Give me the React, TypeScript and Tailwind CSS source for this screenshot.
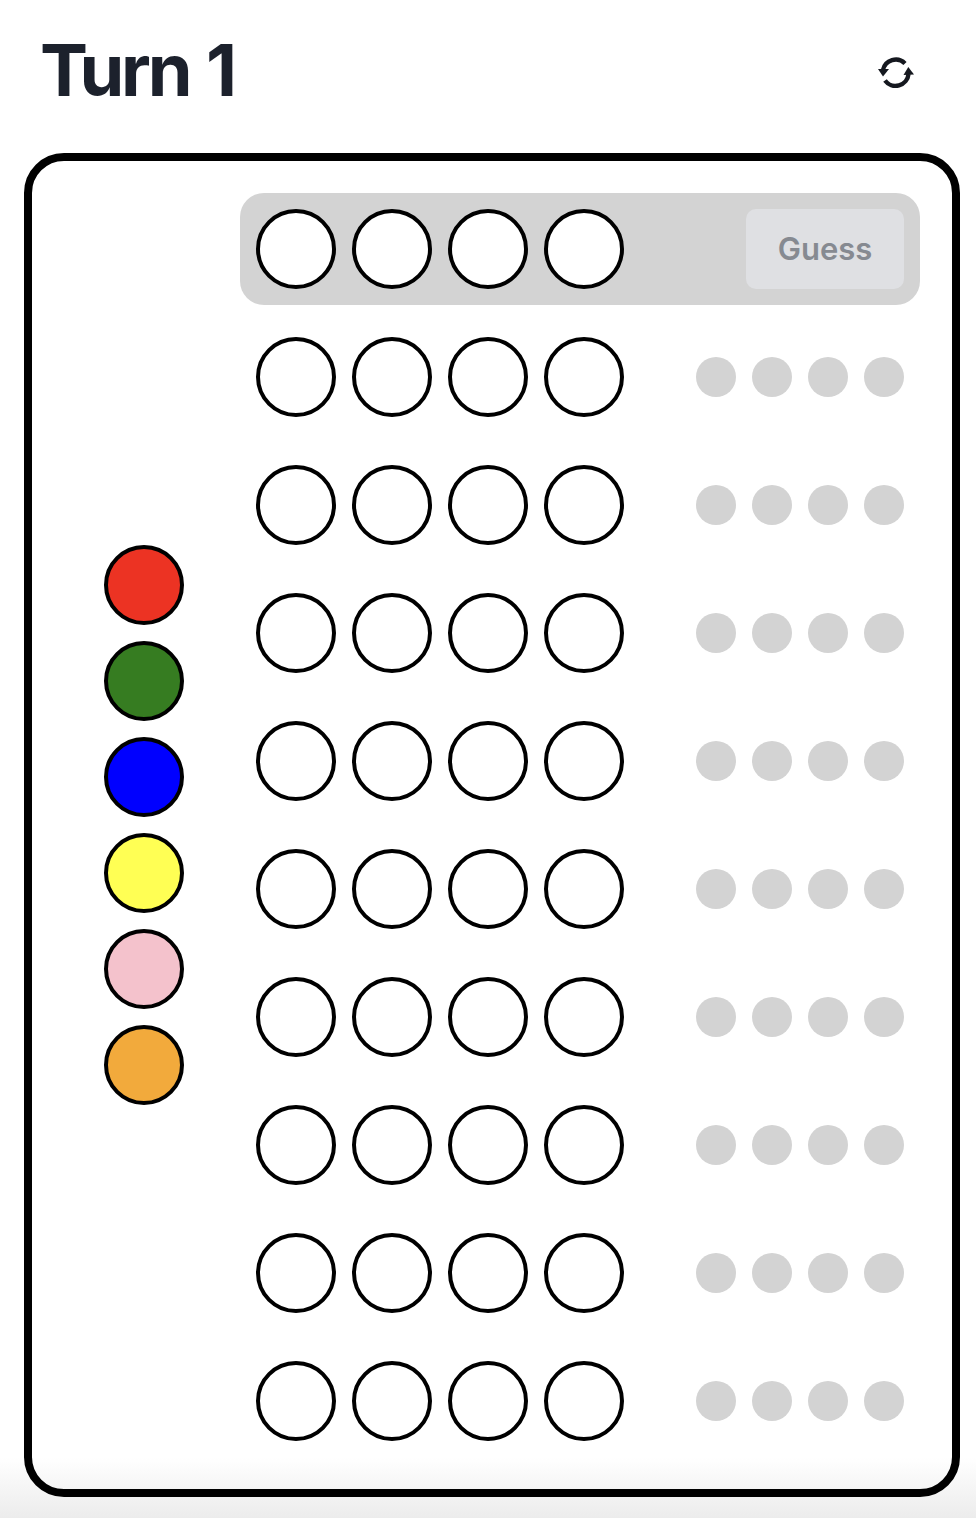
const COLORS = ["bg-[#ec3323]", "bg-[#367c21]", "bg-[#0000ff]", "bg-[#ffff54]", "bg-[#f4c2cc]", "bg-[#f2aa3c]"];

function Peg({ color = "bg-white" }: { color?: string }) {
  return <div className={`h-20 w-20 rounded-full border-4 border-black ${color}`} />;
}

function Pegs() {
  return (
    <div className="flex gap-4">
      {[0, 1, 2, 3].map((i) => (
        <Peg key={i} />
      ))}
    </div>
  );
}

function SyncIcon() {
  return (
    <svg width="40" height="40" viewBox="0 0 40 40" fill="none" className="text-[#15181f]">
      <path d="M8 18 A 13 13 0 0 1 30 11.5" stroke="currentColor" strokeWidth="4.4" />
      <path d="M33.5 22 A 13 13 0 0 1 10 28.5" stroke="currentColor" strokeWidth="4.4" />
      <path d="M3 17 L14 17 L8 24.5 Z" fill="currentColor" />
      <path d="M28.5 23 L39 22.5 L33.3 15 Z" fill="currentColor" />
    </svg>
  );
}

export default function App() {
  return (
    <div className="flex h-[1518px] flex-col bg-gradient-to-b from-white from-[96%] to-[#ececec] pl-6 pr-4 font-['Inter',sans-serif]">
      <header className="flex h-[153px] items-start justify-between pl-4 pr-[45px]">
        <h1 className="mt-[34px] text-[72px] font-bold leading-[72px] tracking-[-0.045em] text-[#1c212c] [word-spacing:3px]">Turn 1</h1>
        <button className="mt-[52px]">
          <SyncIcon />
        </button>
      </header>
      <main className="flex gap-4 rounded-[40px] border-8 border-black p-8">
        <div className="flex w-40 flex-col items-center justify-center gap-4">
          {COLORS.map((c) => (
            <Peg key={c} color={c} />
          ))}
        </div>
        <div className="flex flex-1 flex-col gap-4">
          <div className="flex h-28 items-center justify-between rounded-3xl bg-[#d3d3d3] p-4">
            <Pegs />
            <button className="h-20 w-[158px] rounded-[10px] bg-[#dfe0e3] text-[31px] font-semibold text-[#868a91]">Guess</button>
          </div>
          {Array.from({ length: 9 }).map((_, r) => (
            <div key={r} className="flex h-28 items-center justify-between p-4">
              <Pegs />
              <div className="flex gap-4">
                {[0, 1, 2, 3].map((i) => (
                  <div key={i} className="h-10 w-10 rounded-full bg-[#d3d3d3]" />
                ))}
              </div>
            </div>
          ))}
        </div>
      </main>
    </div>
  );
}
